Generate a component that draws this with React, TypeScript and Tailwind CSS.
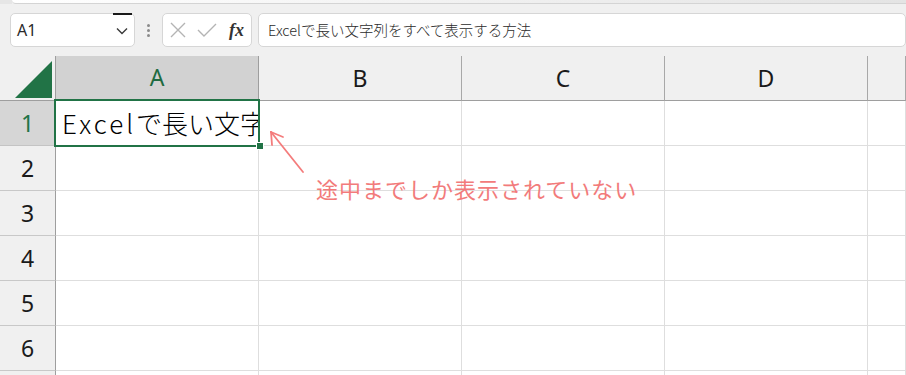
import React from "react";

const JP = { fontFamily: '"Noto Sans CJK JP", "Noto Sans", sans-serif' };

const COLS = ["A", "B", "C", "D", ""];
const ROWS = [1, 2, 3, 4, 5, 6, 7];

export default function App() {
  return (
    <div className="relative w-[906px] h-[375px] overflow-hidden bg-[#f0f0f0]" style={{ fontFamily: '"Noto Sans", "Noto Sans CJK JP", sans-serif' }}>
      {/* top strip */}
      <div className="h-[4px] flex">
        <div className="w-[12px] bg-[#e6e6e6]" />
        <div className="flex-1 bg-gradient-to-r from-white to-[#e4e4e4] border-b border-[#d4d4d4] rounded-bl-[4px]" />
      </div>

      {/* formula toolbar */}
      <div className="h-[52px] flex items-start pt-[9px] pl-[10px]">
        <div className="relative w-[125px] h-[34px] bg-white border border-[#d6d6d6] rounded-[5px] flex items-center justify-between pl-[6px] pr-[5px]">
          <span className="text-[16px] text-[#2b2b2b]" style={{ fontFamily: '"Noto Sans", sans-serif' }}>A1</span>
          <svg width="12" height="8" viewBox="0 0 12 8" className="mr-[1px] mt-[2px]">
            <path d="M1 1.5 L6 6.5 L11 1.5" fill="none" stroke="#3a3a3a" strokeWidth="1.4" />
          </svg>
          <div className="absolute top-[-1px] right-[2px] w-[19px] h-[2px] bg-[#1a1a1a]" />
        </div>
        <div className="w-[27px] h-[34px] flex flex-col items-center justify-center gap-[2px]">
          <div className="w-[3px] h-[3px] rounded-full bg-[#8a8a8a]" />
          <div className="w-[3px] h-[3px] rounded-full bg-[#8a8a8a]" />
          <div className="w-[3px] h-[3px] rounded-full bg-[#8a8a8a]" />
        </div>
        <div className="w-[90px] h-[34px] bg-white border border-[#d6d6d6] rounded-[5px] flex items-center pl-[7px]">
          <svg width="16" height="16" viewBox="0 0 16 16">
            <path d="M1 1 L15 15 M15 1 L1 15" stroke="#b4b4b4" strokeWidth="1.4" fill="none" />
          </svg>
          <svg width="20" height="14" viewBox="0 0 20 14" className="ml-[11px]">
            <path d="M1 7 L7 13 L19 1" stroke="#b4b4b4" strokeWidth="1.4" fill="none" />
          </svg>
          <span className="ml-[12px] text-[18px] italic font-bold text-[#333] leading-none" style={{ fontFamily: '"Liberation Serif", serif' }}>fx</span>
        </div>
        <div className="ml-[6px] flex-1 h-[34px] bg-white border border-[#d6d6d6] rounded-[5px] flex items-center pl-[9px]">
          <span className="text-[14.5px] font-light text-[#2b2b2b]" style={JP}>Excelで長い文字列をすべて表示する方法</span>
        </div>
      </div>

      {/* grid */}
      <div className="grid grid-cols-[56px_203px_203px_203px_203px_38px]">
        {/* header row */}
        <div className="h-[45px] border-r border-b border-[#9e9e9e] bg-[#f0f0f0] relative">
          <svg width="56" height="45" viewBox="0 0 56 45" className="absolute inset-0">
            <polygon points="15,42 52,5 52,42" fill="#217346" />
          </svg>
        </div>
        {COLS.map((c, i) => (
          <div
            key={i}
            className={
              i === 0
                ? "h-[45px] bg-[#d2d2d2] border-r border-[#9e9e9e] border-b-2 border-b-[#217346] flex items-center justify-center text-[23px] text-[#1e6b41]"
                : "h-[45px] bg-[#f0f0f0] border-r border-b border-[#a8a8a8] border-b-[#9e9e9e] flex items-center justify-center text-[23px] text-[#1a1a1a]"
            }
          >
            {c}
          </div>
        ))}
        {ROWS.map((r) => (
          <React.Fragment key={r}>
            <div
              className={
                r === 1
                  ? "h-[45px] bg-[#d6d6d6] border-r border-b border-[#9e9e9e] border-b-[#c4c4c4] flex items-center justify-center text-[23px] text-[#217346]"
                  : "h-[45px] bg-[#f0f0f0] border-r border-b border-[#9e9e9e] border-b-[#c8c8c8] flex items-center justify-center text-[23px] text-[#1a1a1a]"
              }
            >
              {r < 7 ? r : null}
            </div>
            {COLS.map((c, i) => (
              <div key={c + i} className="h-[45px] bg-white border-r border-b border-[#dedede] overflow-hidden flex items-center">
                {r === 1 && i === 0 ? (
                  <span className="whitespace-nowrap pl-[6px] text-[26px] font-light text-black leading-none" style={JP}>
                    <span className="tracking-[3px]">Excel</span>で長い文字列をすべて表示する方法
                  </span>
                ) : null}
              </div>
            ))}
          </React.Fragment>
        ))}
      </div>

      {/* active cell overlay */}
      <div className="absolute left-[54px] top-[99px] w-[206px] h-[48px] border-2 border-[#217346] pointer-events-none" />
      <div className="absolute left-[256px] top-[142px] w-[6px] h-[6px] bg-[#217346] border border-white box-content" />

      {/* annotation */}
      <svg className="absolute left-0 top-0" width="906" height="375" viewBox="0 0 906 375">
        <g stroke="#f47c7c" strokeWidth="1.8" fill="none" strokeLinecap="round">
          <path d="M303 172 L271 132" />
          <path d="M271 132 L272 145" />
          <path d="M271 132 L283 137" />
        </g>
      </svg>
      <div className="absolute left-[316px] top-[173px] text-[22px] leading-[30px] tracking-[1px] text-[#f27b7b]" style={JP}>
        途中までしか表示されていない
      </div>
    </div>
  );
}
